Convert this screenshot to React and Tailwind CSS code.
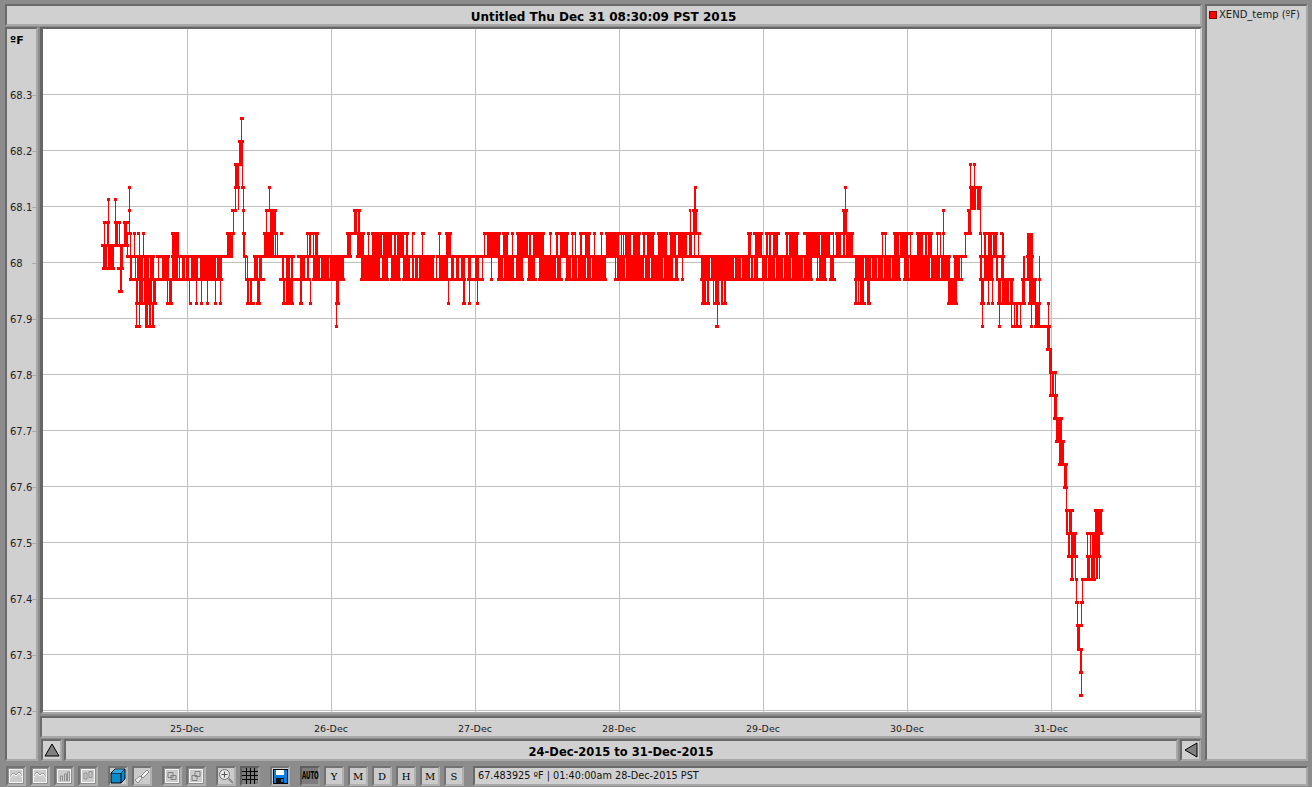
const raised = 'border-2 border-t-[#6a6a6a] border-l-[#6a6a6a] border-r-[#a8a8a8] border-b-[#a8a8a8] bg-[#d0d0d0]'

const yTicks = ['68.3', '68.2', '68.1', '68', '67.9', '67.8', '67.7', '67.6', '67.5', '67.4', '67.3', '67.2']
const xTicks = ['25-Dec', '26-Dec', '27-Dec', '28-Dec', '29-Dec', '30-Dec', '31-Dec']
const gridY = [94, 150, 206, 262, 318, 374, 430, 486, 542, 598, 654, 710]
const gridX = [187, 331, 475, 619, 763, 907, 1051, 1195]

// horizontal marker runs, [y, [x0, x1], ...]
const caps = [
    [118, [240, 244]],
    [141, [238, 244]],
    [164, [234, 243], [969, 972], [973, 976]],
    [187, [128, 131], [234, 240], [241, 245], [268, 271], [694, 697], [844, 847], [969, 982]],
    [199, [107, 110], [114, 117]],
    [210, [128, 131], [231, 237], [242, 245], [265, 277], [353, 361], [689, 691], [692, 698], [842, 848], [942, 945], [967, 971]],
    [222, [103, 110], [114, 121], [123, 129]],
    [233, [124, 132], [133, 136], [137, 140], [142, 145], [171, 179], [226, 235], [242, 246], [263, 278], [280, 283], [306, 319], [346, 365], [367, 370], [371, 409], [412, 415], [421, 425], [438, 441], [445, 452], [483, 501], [502, 509], [511, 514], [516, 545], [549, 552], [555, 569], [571, 576], [579, 591], [593, 596], [600, 603], [605, 641], [642, 655], [657, 668], [669, 701], [747, 752], [753, 763], [765, 780], [785, 799], [803, 834], [835, 854], [881, 887], [893, 913], [916, 933], [936, 941], [942, 945], [964, 972], [979, 982], [983, 998], [1000, 1003]],
    [245, [101, 129]],
    [256, [126, 155], [156, 170], [171, 233], [243, 247], [253, 295], [297, 352], [356, 435], [436, 951], [953, 967], [979, 1005], [1026, 1034]],
    [268, [102, 115], [117, 124]],
    [279, [129, 223], [245, 265], [279, 311], [312, 345], [360, 389], [390, 401], [402, 466], [467, 484], [490, 493], [497, 524], [527, 537], [538, 563], [565, 607], [614, 679], [681, 684], [700, 813], [816, 827], [829, 836], [854, 901], [903, 963], [979, 994], [996, 1014], [1021, 1037], [1038, 1041]],
    [291, [118, 123]],
    [303, [135, 157], [166, 173], [189, 192], [195, 198], [200, 203], [206, 209], [214, 217], [219, 222], [246, 255], [256, 261], [282, 294], [299, 303], [309, 312], [335, 340], [447, 450], [462, 466], [468, 471], [476, 479], [701, 710], [713, 720], [721, 727], [854, 866], [867, 871], [947, 958], [980, 985], [987, 990], [991, 994], [997, 1026], [1028, 1041], [1047, 1050]],
    [326, [135, 141], [145, 155], [335, 338], [715, 719], [981, 984], [998, 1001], [1011, 1022], [1030, 1033], [1034, 1051]],
    [349, [1046, 1052]],
    [372, [1049, 1057]],
    [395, [1049, 1058]],
    [418, [1053, 1063]],
    [441, [1055, 1065]],
    [464, [1058, 1068]],
    [487, [1063, 1068]],
    [510, [1065, 1074], [1094, 1103]],
    [533, [1066, 1077], [1086, 1103]],
    [556, [1067, 1078], [1086, 1101]],
    [579, [1070, 1074], [1075, 1078], [1081, 1096]],
    [602, [1075, 1079], [1080, 1084]],
    [625, [1076, 1083]],
    [649, [1077, 1083]],
    [672, [1079, 1083]],
    [695, [1079, 1083]],
]

// vertical strokes between two levels, [y0, y1, [x0, x1], ...]
const cols = [
    [118, 141, [241, 242]],
    [141, 164, [239, 243]],
    [164, 187, [235, 239], [242, 243], [970, 971], [974, 975]],
    [187, 210, [129, 130], [235, 236], [238, 239], [243, 244], [269, 270], [694, 696], [845, 846], [970, 976], [977, 981]],
    [199, 222, [108, 109], [115, 116]],
    [210, 233, [129, 130], [233, 234], [243, 244], [266, 267], [270, 276], [354, 357], [358, 360], [690, 691], [693, 697], [843, 847], [943, 944], [968, 971], [980, 981]],
    [222, 245, [104, 105], [107, 109], [115, 118], [119, 120], [124, 127]],
    [233, 256, [127, 128], [130, 131], [134, 135], [139, 140], [143, 144], [172, 179], [227, 233], [243, 245], [264, 274], [275, 276], [277, 278], [307, 308], [309, 311], [313, 314], [315, 318], [347, 351], [357, 364], [368, 369], [372, 382], [383, 392], [394, 396], [397, 404], [406, 408], [412, 413], [422, 423], [439, 440], [446, 451], [484, 485], [487, 500], [503, 508], [512, 513], [517, 528], [529, 531], [533, 544], [550, 551], [556, 558], [560, 568], [572, 573], [575, 576], [580, 582], [585, 590], [594, 595], [601, 602], [606, 619], [621, 622], [623, 624], [625, 631], [633, 640], [643, 645], [647, 654], [658, 667], [670, 676], [678, 687], [689, 691], [694, 695], [698, 699], [690, 692], [748, 751], [755, 762], [766, 768], [769, 771], [773, 778], [786, 788], [789, 798], [806, 820], [821, 830], [833, 834], [836, 841], [843, 845], [846, 853], [882, 883], [885, 886], [894, 899], [900, 908], [910, 911], [917, 923], [925, 927], [928, 932], [937, 938], [940, 941], [943, 944], [965, 966], [981, 982], [984, 986], [988, 992], [993, 997], [1002, 1004], [1027, 1033]],
    [245, 268, [103, 107], [108, 114], [120, 123]],
    [256, 279, [130, 132], [135, 136], [137, 143], [144, 149], [150, 154], [158, 159], [162, 169], [172, 178], [179, 180], [182, 185], [186, 189], [191, 198], [200, 216], [217, 222], [245, 246], [247, 248], [254, 258], [259, 262], [282, 284], [286, 290], [291, 293], [300, 305], [307, 309], [313, 320], [321, 329], [330, 344], [361, 380], [382, 388], [391, 400], [403, 410], [412, 414], [415, 418], [419, 434], [436, 437], [439, 448], [451, 454], [456, 459], [461, 465], [468, 471], [475, 479], [482, 483], [491, 492], [498, 503], [504, 514], [516, 523], [528, 535], [539, 556], [557, 561], [566, 571], [572, 577], [578, 586], [587, 591], [592, 606], [615, 616], [617, 625], [626, 644], [645, 650], [651, 663], [664, 673], [675, 678], [682, 683], [701, 710], [711, 734], [735, 741], [742, 750], [751, 753], [754, 758], [762, 767], [768, 775], [776, 783], [784, 791], [792, 803], [804, 812], [817, 818], [819, 826], [830, 834], [855, 864], [865, 871], [872, 877], [878, 883], [884, 891], [892, 900], [904, 909], [910, 930], [931, 940], [941, 950], [954, 960], [961, 962], [980, 982], [984, 993], [996, 998], [1001, 1004], [1023, 1025], [1027, 1033], [1039, 1040]],
    [268, 291, [120, 122]],
    [279, 303, [136, 138], [139, 143], [144, 152], [153, 156], [167, 168], [169, 172], [189, 190], [196, 197], [201, 202], [207, 208], [215, 216], [220, 221], [247, 249], [250, 252], [257, 260], [283, 285], [286, 293], [300, 302], [310, 311], [336, 339], [448, 449], [463, 465], [469, 470], [477, 478], [702, 706], [707, 709], [713, 714], [715, 719], [721, 723], [724, 726], [855, 857], [858, 859], [860, 864], [867, 870], [948, 957], [981, 984], [988, 989], [992, 993], [998, 1001], [1002, 1009], [1010, 1013], [1022, 1025], [1029, 1036], [1039, 1040]],
    [303, 326, [136, 137], [139, 140], [145, 148], [149, 151], [152, 154], [336, 337], [717, 718], [982, 983], [999, 1000], [1011, 1012], [1014, 1015], [1016, 1018], [1020, 1021], [1031, 1032], [1035, 1040], [1048, 1049]],
    [326, 349, [1047, 1050]],
    [349, 372, [1049, 1052]],
    [372, 395, [1050, 1051], [1052, 1054], [1055, 1056]],
    [395, 418, [1054, 1057]],
    [418, 441, [1056, 1062]],
    [441, 464, [1059, 1064]],
    [464, 487, [1064, 1067]],
    [487, 510, [1066, 1067]],
    [510, 533, [1066, 1068], [1069, 1072], [1095, 1102]],
    [533, 556, [1068, 1070], [1071, 1076], [1087, 1088], [1090, 1091], [1092, 1100]],
    [556, 579, [1071, 1073], [1075, 1076], [1087, 1090], [1091, 1095], [1096, 1098], [1099, 1100]],
    [579, 602, [1076, 1077], [1082, 1083]],
    [602, 625, [1077, 1078], [1081, 1082]],
    [625, 649, [1077, 1080]],
    [649, 672, [1080, 1082]],
    [672, 695, [1081, 1082]],
]

const Chart = () => (
    <svg viewBox="43 29 1157 683" className="w-full h-full block" shapeRendering="crispEdges">
        {gridY.map((y) => <rect key={y} x="43" y={y} width="1157" height="1" fill="#c0c0c0" />)}
        {gridX.map((x) => <rect key={x} x={x} y="29" width="1" height="683" fill="#c0c0c0" />)}
        {cols.flatMap(([y0, y1, ...runs]) =>
            runs.map(([a, b]) => <rect key={`c${y0}-${a}`} x={a} y={y0} width={b - a} height={y1 - y0} fill="#ff0000" />)
        )}
        {caps.flatMap(([y, ...runs]) =>
            runs.map(([a, b]) => <rect key={`h${y}-${a}`} x={a} y={y - 1} width={b - a} height="3" fill="#ff0000" />)
        )}
    </svg>
)

const Frame = ({ children }) => (
    <svg viewBox="0 0 16 16" className="w-4 h-4">
        <rect x="0.5" y="0.5" width="15" height="15" fill="none" stroke="#8f8f8f" />
        <rect x="1.5" y="1.5" width="13" height="13" fill="none" stroke="#f4f4f4" />
        {children}
    </svg>
)

const Btn = ({ pressed, className = '', children }) => (
    <div className={`w-5 h-5 flex items-center justify-center border-2 ${pressed ? 'bg-[#7c7c7c] border-t-[#5f5f5f] border-l-[#5f5f5f] border-r-[#999] border-b-[#999]' : 'bg-[#cbcbcb] border-t-[#727272] border-l-[#727272] border-r-[#b0b0b0] border-b-[#b0b0b0]'} ${className}`}>
        {children}
    </div>
)

const LetterBtn = ({ children }) => (
    <Btn className="font-['DejaVu_Serif',serif] text-[10px] text-black">{children}</Btn>
)

const Toolbar = () => (
    <div className="h-6 flex items-start pt-[3px] pl-1.5 pr-1">
        <div className="flex gap-1">
            <Btn><Frame><polyline points="2,9 5,5 8,7 11,4 14,8" fill="none" stroke="#8f8f8f" /><polyline points="2,10 5,6 8,8 11,5 14,9" fill="none" stroke="#fff" /></Frame></Btn>
            <Btn><Frame><polyline points="2,8 5,4 8,7 11,5 14,9" fill="none" stroke="#8f8f8f" /><polyline points="2,9 5,5 8,8 11,6 14,10" fill="none" stroke="#fff" /></Frame></Btn>
            <Btn><Frame><path d="M4.500 13V8h2v5M8.500 13V6h2v7M11.500 13V4h2v9" fill="none" stroke="#8f8f8f" /></Frame></Btn>
            <Btn><Frame><path d="M4 5h3v6H4zM9 3.500h3v6H9z" fill="none" stroke="#8f8f8f" /></Frame></Btn>
        </div>
        <div className="flex gap-1 ml-2.5">
            <Btn>
                <svg viewBox="0 0 16 16" className="w-4 h-4">
                    <path d="M1 5 5 1h10v10l-4 4H1z" fill="#0a8ccc" stroke="#000" />
                    <path d="M1 5h10v10M11 5l4-4" fill="none" stroke="#000" />
                    <path d="M5 1.500h9.500L11 5H1.500z" fill="#36a6dc" />
                </svg>
            </Btn>
            <Btn>
                <svg viewBox="0 0 16 16" className="w-4 h-4">
                    <path d="M1 12 6 8l2 2-4 5z" fill="#f2f2f2" stroke="#8a8a8a" />
                    <path d="M7 8l6-6 2 2-6 6z" fill="#f2f2f2" stroke="#8a8a8a" />
                </svg>
            </Btn>
        </div>
        <div className="flex gap-1 ml-2.5">
            <Btn><Frame><path d="M4 4.500h5v5H4zM7 7.500h5v4H7z" fill="none" stroke="#808080" /></Frame></Btn>
            <Btn><Frame><path d="M7 3.500h5v5H7zM4 7.500h5v5H4z" fill="none" stroke="#808080" /></Frame></Btn>
        </div>
        <div className="flex gap-1 ml-2.5">
            <Btn>
                <svg viewBox="0 0 16 16" className="w-4 h-4">
                    <circle cx="6.500" cy="6.500" r="5" fill="#e6e6e6" stroke="#707070" />
                    <path d="M6.500 3.500v6M3.500 6.500h6" stroke="#555" fill="none" />
                    <path d="M10.500 10.500l4.500 4.500" stroke="#8a8a8a" strokeWidth="2" />
                </svg>
            </Btn>
            <Btn pressed>
                <svg viewBox="0 0 16 16" className="w-4 h-4" shapeRendering="crispEdges">
                    <path d="M4.500 0v16M8.500 0v16M12.500 0v16M0 3.500h16M0 7.500h16M0 11.500h16" stroke="#000" fill="none" />
                </svg>
            </Btn>
        </div>
        <Btn className="ml-2.5">
            <svg viewBox="0 0 16 16" className="w-4 h-4" shapeRendering="crispEdges">
                <rect x="1" y="1" width="14" height="14" fill="#0a7fe0" stroke="#000" />
                <rect x="4" y="2" width="8" height="5" fill="#fff" />
                <rect x="4" y="10" width="8" height="5" fill="#111" />
                <rect x="9" y="11" width="2" height="3" fill="#0a7fe0" />
            </svg>
        </Btn>
        <Btn pressed className="ml-2.5 text-black">
            <span className="font-bold text-[8px] whitespace-nowrap scale-x-[0.68] scale-y-125">AUTO</span>
        </Btn>
        <div className="flex gap-1 ml-1">
            <LetterBtn>Y</LetterBtn>
            <LetterBtn>M</LetterBtn>
            <LetterBtn>D</LetterBtn>
            <LetterBtn>H</LetterBtn>
            <LetterBtn>M</LetterBtn>
            <LetterBtn>S</LetterBtn>
        </div>
        <div className={`ml-[9px] flex-1 h-5 flex items-center pl-[3px] text-[9.7px] text-[#111] ${raised}`}>
            67.483925 ºF | 01:40:00am 28-Dec-2015 PST
        </div>
    </div>
)

const App = () => {
    return (
        <div className="w-[1312px] h-[787px] overflow-hidden bg-[#8c8c8c] flex flex-col font-['DejaVu_Sans',sans-serif] text-black">
            <div className="h-[763px] flex pt-1 pl-[5px] pr-1 pb-[2px]">
                <div className="w-[1197px] flex flex-col">
                    <div className={`h-[22px] flex items-center justify-center pt-[3px] font-bold text-[12px] ${raised}`}>
                        Untitled Thu Dec 31 08:30:09 PST 2015
                    </div>
                    <div className="flex-1 flex mt-px">
                        <div className={`w-[33px] flex flex-col ${raised}`}>
                            <div className="h-[39px] shrink-0 pl-[3px] pt-[4px] font-bold text-[11px]">ºF</div>
                            {yTicks.map((t) => (
                                <div key={t} className="h-14 shrink-0 flex items-center -mt-px mb-px text-[10px] text-[#222] pl-[3px]">
                                    <span className="flex-1">{t}</span>
                                    <span className="w-1 h-px bg-[#aaa]" />
                                </div>
                            ))}
                        </div>
                        <div className="flex-1 flex flex-col ml-[2px]">
                            <div className="h-[687px] border-t-2 border-l-[3px] border-t-[#666] border-l-[#666] border-r-2 border-b-2 border-r-[#d0d0d0] border-b-[#a8a8a8] bg-white">
                                <Chart />
                            </div>
                            <div className={`h-[22px] mt-[2px] flex pl-[73px] pt-[5px] items-center text-[9.5px] text-[#222] ${raised}`}>
                                {xTicks.map((t) => (
                                    <div key={t} className="w-36 shrink-0 text-center">{t}</div>
                                ))}
                            </div>
                            <div className="h-[22px] mt-px ml-px mr-px flex gap-[2px]">
                                <div className={`w-[21px] flex items-center justify-center ${raised}`}>
                                    <svg viewBox="0 0 16 14" className="w-4 h-3.5">
                                        <path d="M8 1 15 13H1z" fill="#808080" stroke="#000" />
                                    </svg>
                                </div>
                                <div className={`flex-1 flex items-center justify-center pt-[5px] font-bold text-[11.5px] ${raised}`}>
                                    24-Dec-2015 to 31-Dec-2015
                                </div>
                                <div className={`w-[21px] flex items-center justify-center ${raised}`}>
                                    <svg viewBox="0 0 14 16" className="w-3.5 h-4">
                                        <path d="M1 8 13 1v14z" fill="#808080" stroke="#000" />
                                    </svg>
                                </div>
                            </div>
                        </div>
                    </div>
                </div>
                <div className={`w-[103px] ml-[3px] flex items-start pl-0.5 pt-px gap-[2px] ${raised}`}>
                    <span className="w-2 h-2 mt-1 bg-[#ff0000] border border-[#800]" />
                    <span className="text-[10px] text-[#222] whitespace-nowrap">XEND_temp (ºF)</span>
                </div>
            </div>
            <Toolbar />
        </div>
    )
}

export default App
